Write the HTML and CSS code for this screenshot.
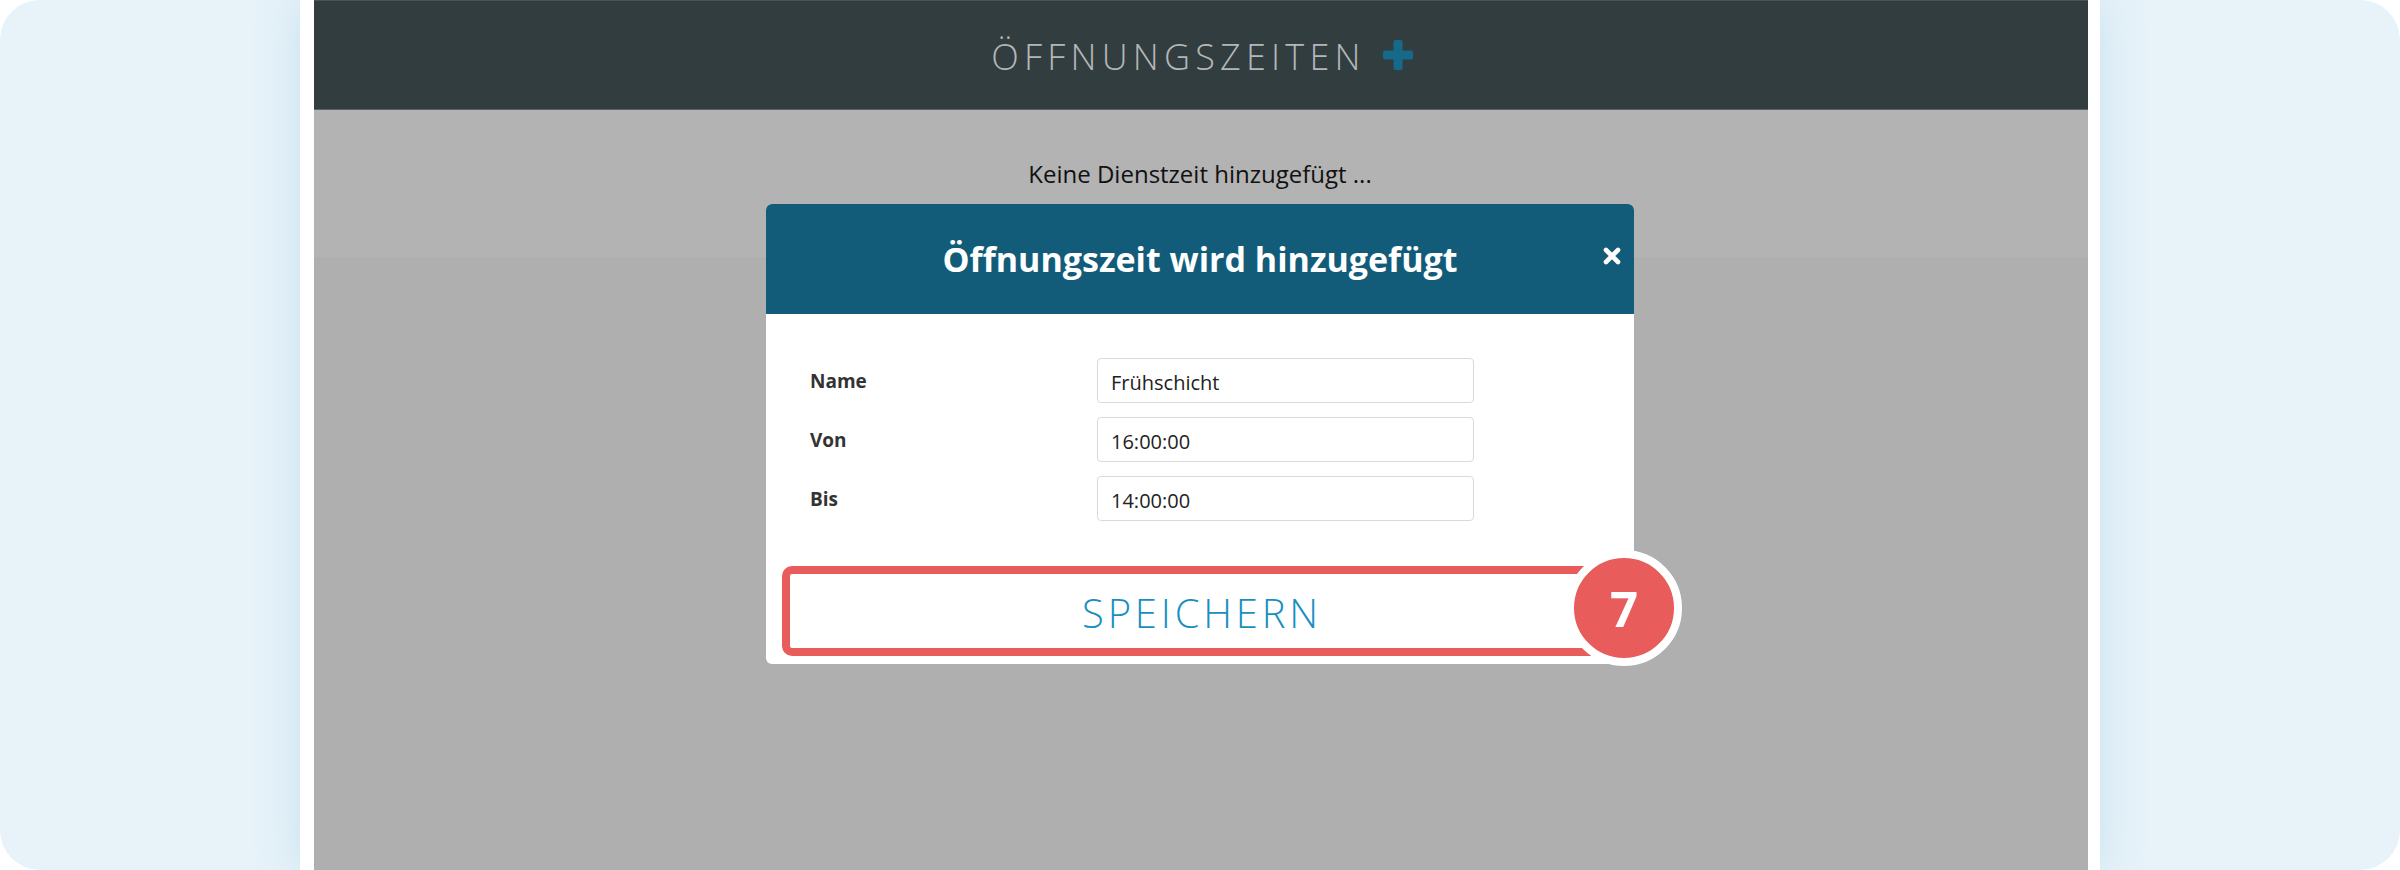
FILE: index.html
```html
<!DOCTYPE html>
<html lang="de">
<head>
<meta charset="utf-8">
<title>Öffnungszeiten</title>
<link rel="stylesheet" href="styles.css">
</head>
<body>
<div class="stage">
  <div class="app">
    <header class="topbar">
      <div class="brand">
        <span class="brand-title">ÖFFNUNGSZEITEN</span>
        <svg class="brand-plus" width="30" height="30" viewBox="0 0 30 30" aria-hidden="true">
          <rect x="10.5" y="0" width="9" height="30" rx="2" fill="#17698a"/>
          <rect x="0" y="10.5" width="30" height="9" rx="2" fill="#17698a"/>
        </svg>
      </div>
    </header>
    <main class="content">
      <p class="empty">Keine Dienstzeit hinzugefügt ...</p>
      <section class="modal">
        <div class="modal-head">
          <h2 class="modal-title">Öffnungszeit wird hinzugefügt</h2>
          <svg class="modal-close" width="18" height="18" viewBox="0 0 18 18" aria-hidden="true">
            <path d="M3 3 L15 15 M15 3 L3 15" stroke="#fff" stroke-width="4.6" stroke-linecap="round"/>
          </svg>
        </div>
        <div class="modal-body">
          <div class="form">
            <label class="label">Name</label>
            <div class="input">Frühschicht</div>
            <label class="label">Von</label>
            <div class="input">16:00:00</div>
            <label class="label">Bis</label>
            <div class="input">14:00:00</div>
          </div>
          <div class="highlight">
            <div class="save">SPEICHERN</div>
          </div>
        </div>
        <div class="badge">7</div>
      </section>
    </main>
  </div>
</div>
</body>
</html>
```

FILE: styles.css
```css
* { box-sizing: border-box; }
html, body { margin: 0; padding: 0; background: #ffffff; }
body { font-family: "Open Sans", "Noto Sans", sans-serif; }

.stage {
  width: 2400px;
  height: 870px;
  border-radius: 40px;
  background: #e7f2f9;
  overflow: hidden;
  padding: 0 300px;
}

.app {
  height: 870px;
  border-left: 14px solid #ffffff;
  border-right: 12px solid #ffffff;
  box-shadow: 0 0 40px rgba(110, 185, 215, 0.28);
  display: flex;
  flex-direction: column;
  background: #afafaf;
}

.topbar {
  height: 110px;
  background: #323d40;
  border-top: 1px solid #4a5457;
  border-bottom: 1px solid #5b6466;
  padding-top: 36px;
  display: flex;
  justify-content: center;
}

.brand {
  display: flex;
  align-items: flex-start;
  padding-left: 2px;
}

.brand-title {
  font-size: 36px;
  line-height: 40px;
  font-weight: 300;
  letter-spacing: 5.2px;
  color: #b4b7b7;
}

.brand-plus {
  margin-left: 17px;
  margin-top: 3px;
}

.content {
  flex: 1;
  background: linear-gradient(#b3b3b3 0, #b3b3b3 147px, #afafaf 147px);
  padding-top: 48px;
}

.empty {
  margin: 0;
  text-align: center;
  font-size: 24px;
  line-height: 32px;
  color: #111111;
  padding-right: 2px;
}

.modal {
  position: relative;
  width: 868px;
  margin: 14px 0 0 calc(50% - 435px);
  background: #ffffff;
  border-radius: 6px;
}

.modal-head {
  position: relative;
  height: 110px;
  background: #135c79;
  border-radius: 6px 6px 0 0;
  padding-top: 1px;
}

.modal-title {
  margin: 0;
  text-align: center;
  color: #ffffff;
  font-size: 34px;
  font-weight: 700;
  line-height: 108px;
}

.modal-close {
  position: absolute;
  right: 13px;
  top: 43px;
}

.modal-body {
  padding: 44px 16px 8px;
}

.form {
  display: grid;
  grid-template-columns: 287px 377px;
  row-gap: 14px;
  align-items: center;
  padding-left: 28px;
}

.label {
  font-size: 19px;
  font-weight: 700;
  color: #333333;
}

.input {
  height: 45px;
  border: 1.5px solid #dadada;
  border-radius: 4px;
  padding: 4px 13px 0;
  display: flex;
  align-items: center;
  font-size: 20px;
  color: #222222;
}

.highlight {
  margin-top: 45px;
  height: 90px;
  border: 8px solid #e85c5c;
  border-radius: 10px;
  background: #ffffff;
  display: flex;
  align-items: center;
  justify-content: center;
}

.save {
  font-size: 40px;
  font-weight: 300;
  letter-spacing: 3.8px;
  color: #1a8fbf;
  padding-left: 4px;
  padding-top: 2px;
}

.badge {
  position: absolute;
  left: 800px;
  top: 346px;
  width: 116px;
  height: 116px;
  border-radius: 50%;
  border: 8px solid #ffffff;
  background: #e85c5c;
  color: #ffffff;
  font-size: 49px;
  font-weight: 700;
  display: flex;
  align-items: center;
  justify-content: center;
}
```
